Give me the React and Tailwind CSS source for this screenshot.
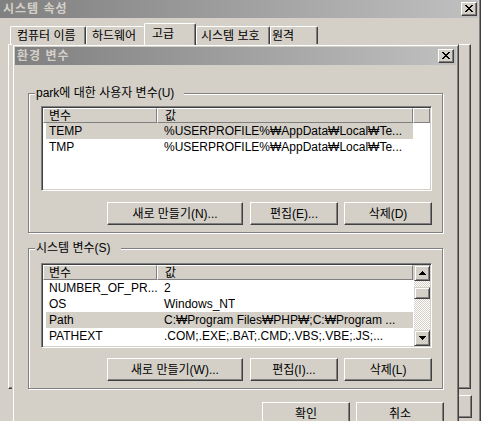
import React from 'react'

const FONT = "font-['Liberation_Sans','DejaVu_Sans','Noto_Sans_CJK_KR',sans-serif]"

const USER_VARS = [
  { name: 'TEMP', value: '%USERPROFILE%₩AppData₩Local₩Te...', sel: true },
  { name: 'TMP', value: '%USERPROFILE%₩AppData₩Local₩Te...' },
]

const SYS_VARS = [
  { name: 'NUMBER_OF_PR...', value: '2' },
  { name: 'OS', value: 'Windows_NT' },
  { name: 'Path', value: 'C:₩Program Files₩PHP₩;C:₩Program ...', sel: true },
  { name: 'PATHEXT', value: '.COM;.EXE;.BAT;.CMD;.VBS;.VBE;.JS;...' },
  { name: 'PROCESSOR_A...', value: 'x86' },
]

function XGlyph() {
  return (
    <svg width="8" height="7" viewBox="0 0 8 7" shapeRendering="crispEdges">
      <path
        d="M0 0h2v1H0zM6 0h2v1H6zM1 1h2v1H1zM5 1h2v1H5zM2 2h4v1H2zM3 3h2v1H3zM2 4h4v1H2zM1 5h2v1H1zM5 5h2v1H5zM0 6h2v1H0zM6 6h2v1H6z"
        fill="#000"
      />
    </svg>
  )
}

function Arrow({ down }) {
  return (
    <svg width="7" height="4" viewBox="0 0 7 4" shapeRendering="crispEdges">
      <path
        d={down ? 'M0 0h7v1H0zM1 1h5v1H1zM2 2h3v1H2zM3 3h1v1H3z' : 'M3 0h1v1H3zM2 1h3v1H2zM1 2h5v1H1zM0 3h7v1H0z'}
        fill="#000"
      />
    </svg>
  )
}

function CloseBox() {
  return (
    <div className="flex h-[14px] w-[16px] items-center justify-center border border-t-white border-l-white border-r-[#404040] border-b-[#404040] bg-[#d4d0c8] pb-[1px] shadow-[inset_-1px_-1px_#808080]">
      <XGlyph />
    </div>
  )
}

function TitleBar({ title, pad }) {
  return (
    <div className={`flex h-[18px] shrink-0 items-center justify-between bg-linear-to-r from-[#808080] to-[#c0c0c0] ${pad}`}>
      <span className="font-bold tracking-[1px] text-[#d4d0c8]">{title}</span>
      <CloseBox />
    </div>
  )
}

function Btn({ children, w }) {
  return (
    <div className={`flex h-[23px] shrink-0 items-center justify-center border border-t-white border-l-white border-r-[#404040] border-b-[#404040] bg-[#d4d0c8] shadow-[inset_-1px_-1px_#808080] ${w}`}>
      {children}
    </div>
  )
}

function Tab({ label, w, sel, noRight }) {
  if (sel) {
    return (
      <div className={`relative z-10 -mb-[1px] flex h-[22px] items-start rounded-t-[2px] border-t border-l border-r border-t-white border-l-white border-r-[#404040] bg-[#d4d0c8] pt-[3px] shadow-[inset_-1px_0_#808080] ${w}`}>
        {label}
      </div>
    )
  }
  return (
    <div className={`flex h-[18px] items-center rounded-t-[2px] border-t border-l border-t-white border-l-white bg-[#d4d0c8] pt-[1px] ${noRight ? '' : 'border-r border-r-[#404040] shadow-[inset_-1px_0_#808080]'} ${w}`}>
      {label}
    </div>
  )
}

function HeaderCell({ children, w }) {
  return (
    <div className={`flex h-full items-center border-t border-l border-r border-b border-t-white border-l-white border-r-[#808080] border-b-[#808080] pl-[5px] ${w}`}>
      {children}
    </div>
  )
}

function ListView({ rows, scroll }) {
  return (
    <div className="flex h-[85px] w-[391px] overflow-hidden border border-t-[#808080] border-l-[#808080] border-r-white border-b-white bg-white p-[1px] shadow-[inset_1px_1px_#404040,inset_-1px_-1px_#d4d0c8]">
      <div className="flex min-w-0 flex-1 flex-col overflow-hidden">
        <div className="flex h-[15px] shrink-0 bg-[#d4d0c8]">
          <HeaderCell w="w-[114px]">변수</HeaderCell>
          <HeaderCell w="w-[256px] pl-[7px]">값</HeaderCell>
          {!scroll && <HeaderCell w="flex-1" />}
        </div>
        {rows.map(r => (
          <div
            key={r.name}
            className={`ml-[3px] flex h-[16px] w-[367px] shrink-0 items-center whitespace-nowrap ${r.sel ? 'bg-[#d4d0c8]' : ''}`}
          >
            <span className="w-[111px] overflow-hidden pl-[3px]">{r.name}</span>
            <span className="overflow-hidden pl-[7px]">{r.value}</span>
          </div>
        ))}
      </div>
      {scroll && (
        <div className="flex w-[16px] shrink-0 flex-col">
          <div className="flex h-[16px] shrink-0 items-center justify-center border border-t-[#d4d0c8] border-l-[#d4d0c8] border-r-[#404040] border-b-[#404040] bg-[#d4d0c8] shadow-[inset_1px_1px_#fff,inset_-1px_-1px_#808080]">
            <Arrow />
          </div>
          <div className="flex-1 bg-[repeating-conic-gradient(#d4d0c8_0_25%,#fff_0_50%)] bg-[length:2px_2px] pt-[6px]">
            <div className="h-[12px] border border-t-[#d4d0c8] border-l-[#d4d0c8] border-r-[#404040] border-b-[#404040] bg-[#d4d0c8] shadow-[inset_1px_1px_#fff,inset_-1px_-1px_#808080]" />
          </div>
          <div className="flex h-[16px] shrink-0 items-center justify-center border border-t-[#d4d0c8] border-l-[#d4d0c8] border-r-[#404040] border-b-[#404040] bg-[#d4d0c8] shadow-[inset_1px_1px_#fff,inset_-1px_-1px_#808080]">
            <Arrow down />
          </div>
        </div>
      )}
    </div>
  )
}

function Group({ label, h, pt, rows, scroll, btns, mt }) {
  return (
    <div className={`relative ml-[13px] w-[415px] shrink-0 border border-[#808080] pl-[12px] shadow-[inset_1px_1px_#fff,1px_1px_#fff] ${h} ${pt} ${mt}`}>
      <span className="absolute -top-[8px] left-[6px] bg-[#d4d0c8] pl-[1px] pr-[10px] leading-[14px]">{label}</span>
      <ListView rows={rows} scroll={scroll} />
      <div className={`flex w-[391px] justify-end ${scroll ? 'mt-[10px]' : 'mt-[11px]'}`}>
        <Btn w="w-[136px]">{btns[0]}</Btn>
        <div className="w-[7px]" />
        <Btn w="w-[88px]">{btns[1]}</Btn>
        <div className="w-[6px]" />
        <Btn w="w-[88px]">{btns[2]}</Btn>
      </div>
    </div>
  )
}

export default function App() {
  return (
    <div className={`relative h-[421px] w-[481px] overflow-hidden bg-[#d4d0c8] text-[12px] leading-[14px] text-black ${FONT}`}>
      {/* 시스템 속성 */}
      <div className="flex h-full flex-col border-r border-r-[#404040] pr-[2px] shadow-[inset_-1px_0_#808080]">
        <TitleBar title="시스템 속성" pad="pl-[3px] pr-[1px]" />
        <div className="mt-[5px] flex h-[21px] items-end pl-[10px]">
          <Tab label="컴퓨터 이름" w="w-[76px] pl-[6px]" />
          <Tab label="하드웨어" w="w-[58px] pl-[5px]" noRight />
          <Tab label="고급" w="w-[52px] pl-[7px]" sel />
          <Tab label="시스템 보호" w="w-[74px] pl-[4px]" />
          <Tab label="원격" w="w-[48px] pl-[1px]" />
        </div>
        <div className="ml-[8px] h-[345px] w-[463px] shrink-0 border border-t-white border-l-white border-r-[#404040] border-b-[#404040] shadow-[inset_-1px_-1px_#808080]" />
        <div className="mt-[6px] flex justify-end gap-[6px] pr-[6px]">
          <Btn w="w-[75px]">확인</Btn>
          <Btn w="w-[75px]">취소</Btn>
          <Btn w="w-[75px]">적용(A)</Btn>
        </div>
      </div>

      {/* 환경 변수 */}
      <div className="absolute left-[12px] top-[44px] flex h-[400px] w-[447px] flex-col border border-t-[#d4d0c8] border-l-[#d4d0c8] border-r-[#404040] border-b-[#404040] bg-[#d4d0c8] p-[2px] shadow-[inset_1px_1px_#fff,inset_-1px_-1px_#808080]">
        <TitleBar title="환경 변수" pad="pl-[2px] pr-[2px]" />
        <Group
          label="park에 대한 사용자 변수(U)"
          h="h-[140px]"
          pt="pt-[12px]"
          mt="mt-[28px]"
          rows={USER_VARS}
          btns={['새로 만들기(N)...', '편집(E)...', '삭제(D)']}
        />
        <Group
          label="시스템 변수(S)"
          h="h-[141px]"
          pt="pt-[14px]"
          mt="mt-[15px]"
          rows={SYS_VARS}
          scroll
          btns={['새로 만들기(W)...', '편집(I)...', '삭제(L)']}
        />
        <div className="mt-[13px] flex justify-end gap-[6px] pr-[12px]">
          <Btn w="w-[88px]">확인</Btn>
          <Btn w="w-[88px]">취소</Btn>
        </div>
      </div>
    </div>
  )
}
